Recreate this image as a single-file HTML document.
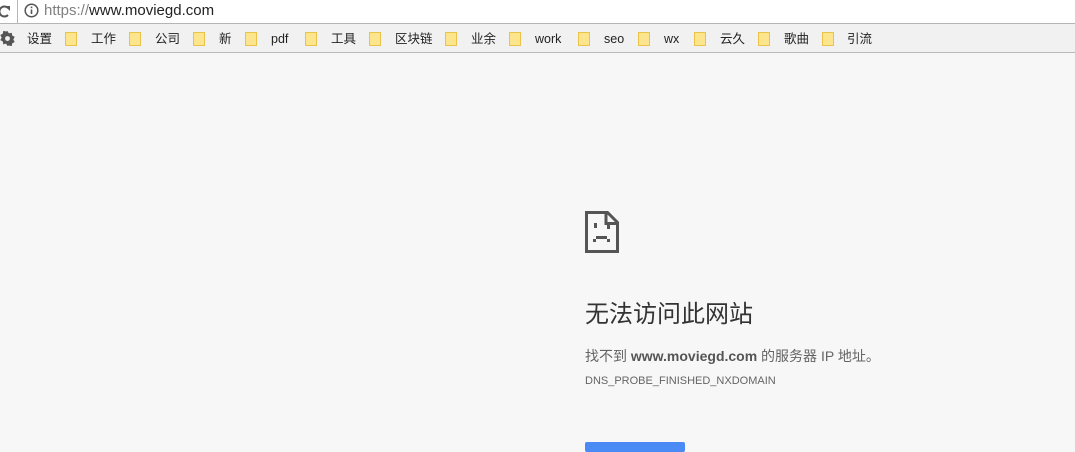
<!DOCTYPE html>
<html><head><meta charset="utf-8"><style>
*{margin:0;padding:0;box-sizing:border-box}
body{width:1075px;height:444px;overflow:hidden;background:#f7f7f7;font-family:"Liberation Sans","Noto Sans CJK SC",sans-serif;position:relative}
.top{position:absolute;left:0;top:0;width:1075px;height:24px;background:#fff;border-bottom:1px solid #b5b5b5}
.addr{position:absolute;left:17px;top:-1px;width:1070px;height:25px;border-left:1px solid #b5b5b5;border-radius:2px}
.url{position:absolute;left:44px;top:0;height:22px;line-height:22px;font-size:15px;color:#222}
.url span{color:#808080}
.bm{position:absolute;left:0;top:24px;width:1075px;height:29px;background:#f1f1f1;border-bottom:1px solid #b9b9b9}
.f{position:absolute;top:8px;width:12px;height:14px;background:#fde58e;border:1px solid #eac34a}
.l{position:absolute;top:1px;height:28px;line-height:28px;font-size:12.5px;color:#222}
.icon{position:absolute;left:585px;top:211px}
h1{position:absolute;left:585px;top:298px;font-size:24px;line-height:34px;font-weight:normal;color:#333}
.p{position:absolute;left:585px;top:346px;font-size:14px;line-height:20px;color:#646464}
.p b{color:#555}
.code{position:absolute;left:585px;top:374px;font-size:11px;line-height:14px;color:#646464}
.btn{position:absolute;left:585px;top:442px;width:100px;height:10px;background:#4a8af4;border-radius:2px}
</style></head><body>
<div class="top"><div class="addr"></div>
<svg style="position:absolute;left:0;top:4px" width="10" height="15" viewBox="0 0 10 15"><path d="M8 4A5 5 0 1 0 8 11" fill="none" stroke="#555" stroke-width="2"/><path d="M5 2h5v5z" fill="#555"/></svg>
<svg style="position:absolute;left:24px;top:3px" width="15" height="15" viewBox="0 0 15 15"><circle cx="7.5" cy="7.5" r="6.3" fill="none" stroke="#555" stroke-width="1.5"/><rect x="6.7" y="6.5" width="1.6" height="4.5" fill="#555"/><rect x="6.7" y="3.6" width="1.6" height="1.6" fill="#555"/></svg>
<div class="url"><span>https://</span>www.moviegd.com</div></div>
<div class="bm">
<svg style="position:absolute;left:0;top:7px" width="15" height="15" viewBox="0 0 16 16"><path d="M8 0l1.5 2.5 3-0.7 0.5 3 2.7 1.5-1.5 2.7 1.5 2.7-2.7 1.5-0.5 3-3-0.7L8 16l-1.5-2.5-3 0.7-0.5-3L0.3 9.7 1.8 7 0.3 4.3 3 2.8l0.5-3 3 0.7z" fill="#555"/><circle cx="8" cy="8" r="2.6" fill="#f1f1f1"/></svg>
<div class="l" style="left:27px">设置</div>
<div class="f" style="left:65px"></div><div class="l" style="left:91px">工作</div>
<div class="f" style="left:129px"></div><div class="l" style="left:155px">公司</div>
<div class="f" style="left:193px"></div><div class="l" style="left:219px">新</div>
<div class="f" style="left:245px"></div><div class="l" style="left:271px">pdf</div>
<div class="f" style="left:305px"></div><div class="l" style="left:331px">工具</div>
<div class="f" style="left:369px"></div><div class="l" style="left:395px">区块链</div>
<div class="f" style="left:445px"></div><div class="l" style="left:471px">业余</div>
<div class="f" style="left:509px"></div><div class="l" style="left:535px">work</div>
<div class="f" style="left:578px"></div><div class="l" style="left:604px">seo</div>
<div class="f" style="left:638px"></div><div class="l" style="left:664px">wx</div>
<div class="f" style="left:694px"></div><div class="l" style="left:720px">云久</div>
<div class="f" style="left:758px"></div><div class="l" style="left:784px">歌曲</div>
<div class="f" style="left:822px"></div><div class="l" style="left:847px">引流</div>
</div>
<svg class="icon" width="34" height="42" viewBox="0 0 34 42"><path d="M1.5 1.5h21l10 10v29h-31z" fill="none" stroke="#555" stroke-width="3"/><path d="M21 1.5v11h11" fill="none" stroke="#555" stroke-width="3"/><rect x="9" y="12" width="3" height="5" fill="#555"/><rect x="22" y="14" width="3" height="4" fill="#555"/><rect x="11" y="25" width="11" height="3" fill="#555"/><rect x="8" y="28" width="3" height="3" fill="#555"/><rect x="22" y="28" width="3" height="3" fill="#555"/></svg>
<h1>无法访问此网站</h1>
<div class="p">找不到 <b>www.moviegd.com</b> 的服务器 IP 地址。</div>
<div class="code">DNS_PROBE_FINISHED_NXDOMAIN</div>
<div class="btn"></div>
</body></html>
